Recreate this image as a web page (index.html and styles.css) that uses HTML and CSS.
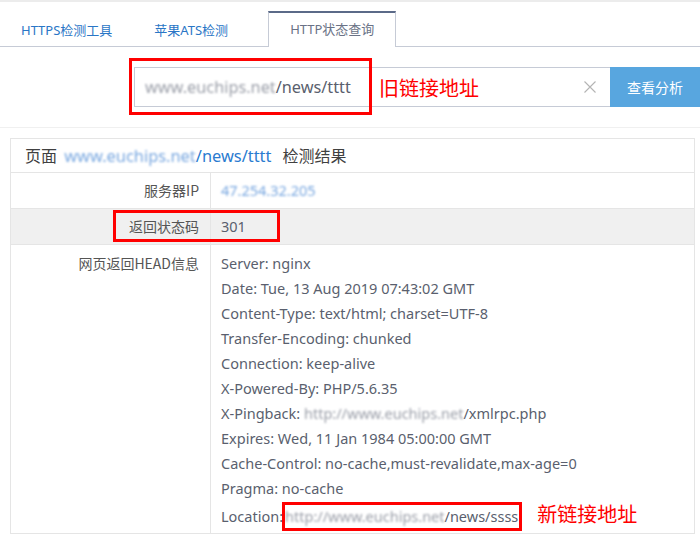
FILE: index.html
```html
<!DOCTYPE html>
<html lang="zh-CN">
<head>
<meta charset="utf-8">
<title>HTTP状态查询</title>
<link rel="stylesheet" href="styles.css">
</head>
<body>
<div class="page">
  <nav class="tabs">
    <a class="tab tab-first">HTTPS检测工具</a>
    <a class="tab">苹果ATS检测</a>
    <a class="tab active">HTTP状态查询</a>
  </nav>

  <div class="search">
    <div class="field">
      <span class="field-text"><span class="blur blur-gray">www.euchips.net</span>/news/tttt</span>
      <span class="clear">
        <svg width="12" height="12" viewBox="0 0 12 12"><path d="M0.5 0.5 L11.5 11.5 M11.5 0.5 L0.5 11.5" stroke="#b4b4b4" stroke-width="1.1" fill="none"/></svg>
      </span>
      <span class="mark mark-old"></span>
      <span class="note note-old">旧链接地址</span>
    </div>
    <button class="btn">查看分析</button>
  </div>

  <div class="sep"></div>

  <section class="panel">
    <div class="panel-head">页面 <a class="head-link"><span class="blur blur-blue">www.euchips.net</span>/news/tttt</a> 检测结果</div>

    <div class="row">
      <div class="label">服务器IP</div>
      <div class="value"><span class="blur blur-blue">47.254.32.205</span></div>
    </div>

    <div class="row alt">
      <div class="label">返回状态码</div>
      <div class="value">301</div>
      <span class="mark mark-code"></span>
    </div>

    <div class="row">
      <div class="label label-top">网页返回HEAD信息</div>
      <div class="value lines">
        <div class="line">Server: nginx</div>
        <div class="line">Date: Tue, 13 Aug 2019 07:43:02 GMT</div>
        <div class="line">Content-Type: text/html; charset=UTF-8</div>
        <div class="line">Transfer-Encoding: chunked</div>
        <div class="line">Connection: keep-alive</div>
        <div class="line">X-Powered-By: PHP/5.6.35</div>
        <div class="line">X-Pingback: <span class="blur blur-gray">http://www.euchips.net</span>/xmlrpc.php</div>
        <div class="line">Expires: Wed, 11 Jan 1984 05:00:00 GMT</div>
        <div class="line">Cache-Control: no-cache,must-revalidate,max-age=0</div>
        <div class="line">Pragma: no-cache</div>
        <div class="line">Location:<span class="loc"><span class="blur blur-gray">http://www.euchips.net</span>/news/ssss</span><span class="note note-new">新链接地址</span></div>
      </div>
    </div>
  </section>
</div>
</body>
</html>
```

FILE: styles.css
```css
* { box-sizing: border-box; }

html, body {
  margin: 0;
  padding: 0;
  background: #fff;
}

body {
  font-family: "Noto Sans", "Noto Sans CJK SC", sans-serif;
  color: #555;
  width: 700px;
  height: 536px;
  overflow: hidden;
}

.page {
  border-top: 2px solid #ececec;
}

/* tabs */
.tabs {
  display: flex;
  align-items: flex-end;
  height: 45px;
  border-bottom: 1px solid #c6cbd6;
}

.tab {
  display: block;
  height: 35px;
  line-height: 33px;
  padding: 0 21px;
  font-size: 13px;
  color: #2a76c6;
  margin-bottom: -1px;
  border-top: 2px solid transparent;
}

.tab.active {
  margin-left: 19px;
  padding: 0 21px;
  line-height: 32px;
  color: #6a7286;
  background: #fff;
  border-top: 2px solid #5b6a88;
  border-left: 1px solid #c6cbd6;
  border-right: 1px solid #c6cbd6;
  height: 36px;
}

/* search */
.search {
  display: flex;
  margin: 20px 0 0 134px;
  height: 40px;
}

.field {
  position: relative;
  flex: 1;
  display: flex;
  align-items: center;
  border: 1px solid #c6cbd6;
  border-right: none;
  padding-left: 10px;
}

.field-text {
  flex: 1;
  font-size: 16.3px;
  color: #5a5f6e;
}

.clear {
  display: flex;
  width: 12px;
  height: 12px;
  margin-right: 14px;
}

.btn {
  width: 90px;
  height: 40px;
  border: none;
  background: #58a6df;
  color: #fff;
  font-family: "Noto Sans CJK SC", sans-serif;
  font-size: 14px;
  padding: 0;
}

.mark {
  position: absolute;
  border: 3px solid #f00;
  pointer-events: none;
}

.mark-old {
  left: -6px;
  top: -10px;
  width: 243px;
  height: 57px;
}

.note {
  color: #f00;
  font-family: "Noto Sans CJK SC", sans-serif;
  font-size: 20px;
}

.note-old {
  position: absolute;
  left: 244px;
  top: 7px;
  line-height: 26px;
}

.sep {
  margin-top: 20px;
  height: 1px;
  background: #f0f0f0;
}

/* panel */
.panel {
  margin: 10px 5px 0 10px;
  border: 1px solid #e5e5e5;
}

.panel-head {
  height: 34px;
  line-height: 34px;
  padding-left: 14px;
  font-size: 16px;
  color: #404040;
  border-bottom: 1px solid #e5e5e5;
}

.head-link {
  color: #2a7bd0;
  font-size: 16.4px;
  margin: 0 7px 0 3px;
}

.row {
  position: relative;
  display: grid;
  grid-template-columns: 200px 1fr;
  border-bottom: 1px solid #e5e5e5;
}

.row:last-child { border-bottom: none; }

.row.alt { background: #f0f0f0; }

.label {
  text-align: right;
  padding-right: 11px;
  border-right: 1px solid #e5e5e5;
  font-family: "Noto Sans CJK SC", sans-serif;
  font-size: 14px;
  line-height: 35px;
  color: #555;
}

.label-top { line-height: 25px; padding-top: 6px; }

.value {
  padding-left: 10px;
  font-size: 14.5px;
  line-height: 35px;
  color: #5a5f6e;
}

.lines {
  padding-top: 6px;
  padding-bottom: 4px;
}

.line {
  line-height: 25px;
  white-space: nowrap;
}

.mark-code {
  left: 102px;
  top: 1px;
  width: 167px;
  height: 32px;
}

.loc {
  position: relative;
  margin-left: 2px;
}

.loc::after {
  content: "";
  position: absolute;
  left: -3px;
  right: -4px;
  top: -4px;
  bottom: -5px;
  border: 3px solid #f00;
}

.note-new {
  margin-left: 19px;
  line-height: 25px;
}

.blur {
  filter: blur(1.3px);
}

.blur-gray { color: #9a9ea8; }
.blur-blue { color: #7aa8e0; }
```
